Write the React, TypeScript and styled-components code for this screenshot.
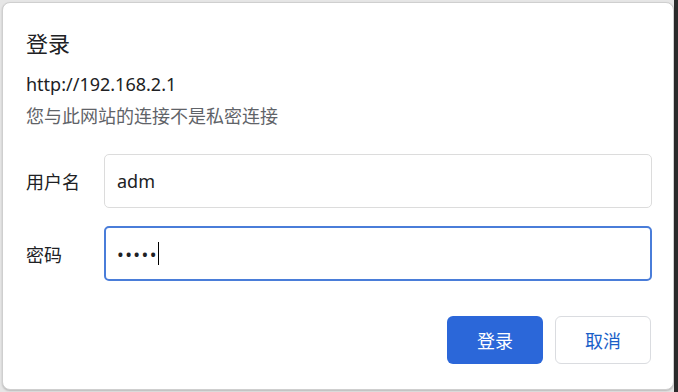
import React from 'react';
import styled, { createGlobalStyle } from 'styled-components';

const Global = createGlobalStyle`
  html, body {
    margin: 0;
    padding: 0;
    width: 678px;
    height: 392px;
    overflow: hidden;
    background: #e4e4e4;
  }
  * { box-sizing: border-box; }
`;

const Screen = styled.div`
  width: 678px;
  height: 392px;
  display: flex;
  padding: 2px 0 2px 2px;
  border-right: 4px solid #2b2b2b;
  background: #e6e6e6;
  font-family: "Noto Sans", "Noto Sans CJK SC", sans-serif;
`;

const Dialog = styled.div`
  flex: 1;
  background: #fff;
  border: 1px solid #cfcfcf;
  border-radius: 8px;
  box-shadow: 0 1px 2px rgba(0, 0, 0, 0.2);
  padding: 25px 21px 0 23px;
  display: flex;
  flex-direction: column;
`;

const Title = styled.h1`
  margin: 0;
  font-size: 22px;
  line-height: 30px;
  font-weight: 400;
  color: #202124;
`;

const Url = styled.div`
  margin-top: 15px;
  font-size: 18px;
  line-height: 22px;
  color: #202124;
`;

const Note = styled.div`
  margin-top: 10px;
  font-size: 18px;
  line-height: 22px;
  color: #5f6368;
`;

const Form = styled.div`
  margin-top: 27px;
  display: flex;
  flex-direction: column;
  gap: 18px;
`;

const Row = styled.div`
  display: flex;
  align-items: center;
`;

const Label = styled.div`
  width: 78px;
  font-size: 18px;
  color: #202124;
`;

const Field = styled.div<{ $focused?: boolean }>`
  flex: 1;
  height: ${p => (p.$focused ? 55 : 54)}px;
  border: ${p => (p.$focused ? '2px solid #4a7dd9' : '1px solid #dcdcdc')};
  border-radius: 5px;
  padding-left: ${p => (p.$focused ? 11 : 12)}px;
  display: flex;
  align-items: center;
  font-size: 18px;
  color: #202124;
`;

const Dots = styled.span`
  font-size: 18px;
  letter-spacing: 1.4px;
  color: #202124;
`;

const Caret = styled.span`
  width: 1px;
  height: 23px;
  background: #000;
`;

const Actions = styled.div`
  margin-top: 35px;
  padding-right: 1px;
  display: flex;
  justify-content: flex-end;
  gap: 12px;
`;

const Button = styled.button<{ $primary?: boolean }>`
  width: 96px;
  height: 48px;
  border-radius: 6px;
  font-family: inherit;
  font-size: 18px;
  border: ${p => (p.$primary ? 'none' : '1px solid #dadce0')};
  background: ${p => (p.$primary ? '#2b67d9' : '#fff')};
  color: ${p => (p.$primary ? '#fff' : '#1a5fc8')};
  padding: 0;
`;

export default function App() {
  return (
    <>
      <Global />
      <Screen>
        <Dialog>
          <Title>登录</Title>
          <Url>http://192.168.2.1</Url>
          <Note>您与此网站的连接不是私密连接</Note>
          <Form>
            <Row>
              <Label>用户名</Label>
              <Field>adm</Field>
            </Row>
            <Row>
              <Label>密码</Label>
              <Field $focused>
                <Dots>•••••</Dots>
                <Caret />
              </Field>
            </Row>
          </Form>
          <Actions>
            <Button $primary>登录</Button>
            <Button>取消</Button>
          </Actions>
        </Dialog>
      </Screen>
    </>
  );
}
